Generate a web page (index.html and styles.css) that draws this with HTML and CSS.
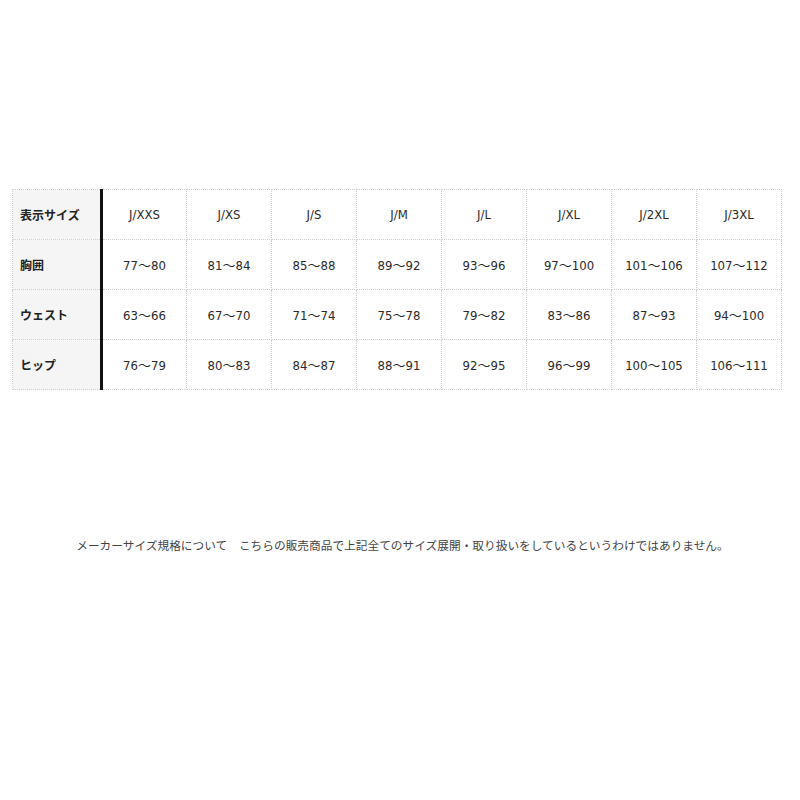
FILE: index.html
```html
<!DOCTYPE html>
<html lang="ja">
<head>
<meta charset="utf-8">
<link rel="stylesheet" href="styles.css">
</head>
<body>
<div class="page">
  <table class="size-table">
    <colgroup>
      <col class="col-label">
      <col span="8">
    </colgroup>
    <tr>
      <th class="label">表示サイズ</th>
      <td>J/XXS</td><td>J/XS</td><td>J/S</td><td>J/M</td><td>J/L</td><td>J/XL</td><td>J/2XL</td><td>J/3XL</td>
    </tr>
    <tr>
      <th class="label">胸囲</th>
      <td>77～80</td><td>81～84</td><td>85～88</td><td>89～92</td><td>93～96</td><td>97～100</td><td>101～106</td><td>107～112</td>
    </tr>
    <tr>
      <th class="label">ウェスト</th>
      <td>63～66</td><td>67～70</td><td>71～74</td><td>75～78</td><td>79～82</td><td>83～86</td><td>87～93</td><td>94～100</td>
    </tr>
    <tr>
      <th class="label">ヒップ</th>
      <td>76～79</td><td>80～83</td><td>84～87</td><td>88～91</td><td>92～95</td><td>96～99</td><td>100～105</td><td>106～111</td>
    </tr>
  </table>
  <p class="note">メーカーサイズ規格について　こちらの販売商品で上記全てのサイズ展開・取り扱いをしているというわけではありません。</p>
</div>
</body>
</html>
```

FILE: styles.css
```css
html, body {
  margin: 0;
  padding: 0;
  background: #ffffff;
}
.page {
  padding: 189px 0 0 12px;
  width: 788px;
  box-sizing: border-box;
}
.size-table {
  border-collapse: collapse;
  table-layout: fixed;
  width: 770px;
  font-family: "DejaVu Sans Condensed", "Noto Sans CJK JP", sans-serif;
}
.col-label {
  width: 89px;
}
.size-table th,
.size-table td {
  height: 49px;
  padding: 0;
  border: 1px dotted #cfcfcf;
  text-align: center;
  vertical-align: middle;
  font-size: 13px;
  color: #2a2a2a;
  font-weight: normal;
}
.size-table th.label {
  background: #f5f5f5;
  text-align: left;
  padding-left: 7px;
  border-right: 3px solid #111111;
  font-family: "Noto Sans CJK JP", sans-serif;
  font-weight: 700;
  font-size: 12px;
  color: #222222;
}
.note {
  margin: 148px 0 0 -12px;
  padding-left: 5px;
  width: 800px;
  box-sizing: border-box;
  text-align: center;
  font-family: "Noto Sans CJK JP", sans-serif;
  font-size: 11.7px;
  color: #444444;
  line-height: 14px;
}
```
